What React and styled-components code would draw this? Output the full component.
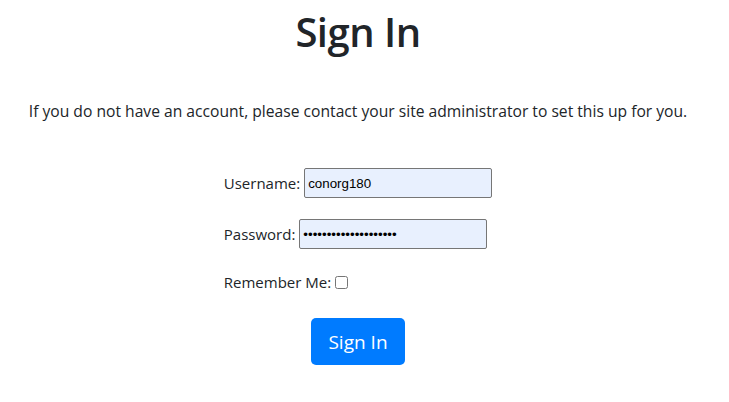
import styled, { createGlobalStyle } from "styled-components";

const GlobalStyle = createGlobalStyle`
    html, body {
        margin: 0;
        padding: 0;
        background-color: #ffffff;
    }
    body {
        font-family: "Open Sans", "Noto Sans", sans-serif;
        color: #212529;
    }
`;

export default function App() {
    return (
        <Page>
            <GlobalStyle />
            <Title>Sign In</Title>
            <Notice>
                If you do not have an account, please contact your site administrator to set this up for you.
            </Notice>
            <FormWrap>
                <Form>
                    <Row>
                        <Label htmlFor="username">Username:</Label>
                        <Input id="username" type="text" defaultValue="conorg180" />
                    </Row>
                    <Row>
                        <Label htmlFor="password">Password:</Label>
                        <Input id="password" type="password" defaultValue="conorg180conorg180ab" />
                    </Row>
                    <Row $compact>
                        <Label htmlFor="remember">Remember Me:</Label>
                        <Checkbox id="remember" type="checkbox" />
                    </Row>
                </Form>
            </FormWrap>
            <ButtonRow>
                <Button type="button">Sign In</Button>
            </ButtonRow>
        </Page>
    );
}

const Page = styled.div`
    width: 716px;
    display: flex;
    flex-direction: column;
    align-items: center;
    padding-top: 8px;
`;

const Title = styled.h1`
    margin: 0;
    font-size: 40px;
    font-weight: 600;
    line-height: 48px;
    letter-spacing: -0.5px;
`;

const Notice = styled.p`
    margin: 43px 0 0 0;
    font-size: 15.65px;
    line-height: 24px;
    text-align: center;
    white-space: nowrap;
`;

const FormWrap = styled.div`
    margin-top: 45px;
    display: flex;
    justify-content: center;
`;

const Form = styled.form`
    display: flex;
    flex-direction: column;
    gap: 21px;
`;

const Row = styled.div`
    display: flex;
    align-items: center;
    height: ${(p) => (p.$compact ? "24px" : "30px")};
    font-size: 15px;
`;

const Label = styled.label`
    margin-right: 4px;
`;

const Input = styled.input`
    box-sizing: border-box;
    width: 188px;
    height: 30px;
    padding: 1px 3px;
    border: 1px solid #767676;
    border-radius: 2px;
    background-color: #e8f0fe;
    font-family: "Liberation Sans", Arial, sans-serif;
    font-size: 13.33px;
    color: #000000;
`;

const Checkbox = styled.input`
    width: 13px;
    height: 13px;
    margin: 0;
`;

const ButtonRow = styled.div`
    margin-top: 24px;
    display: flex;
    justify-content: center;
`;

const Button = styled.button`
    width: 94px;
    height: 47px;
    border: none;
    border-radius: 5px;
    background-color: #007bff;
    color: #ffffff;
    font-family: "Open Sans", "Noto Sans", sans-serif;
    font-size: 19px;
    cursor: pointer;
`;
